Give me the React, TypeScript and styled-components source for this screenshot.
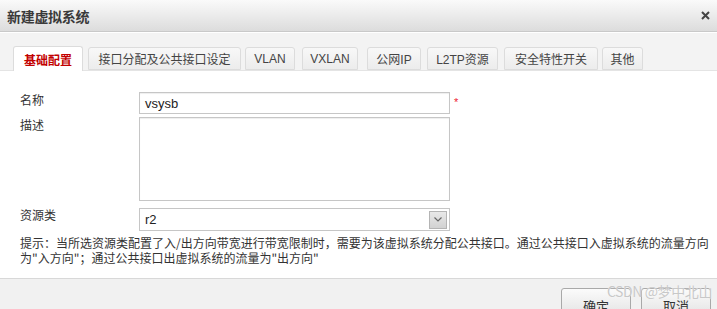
import React from 'react'
import styled, { createGlobalStyle } from 'styled-components'

const GlobalStyle = createGlobalStyle`
  html, body {
    margin: 0;
    padding: 0;
    overflow: hidden;
    background: #fff;
  }
  body {
    font-family: "Liberation Sans", "Noto Sans CJK SC", sans-serif;
    font-size: 12px;
    color: #333;
  }
`

const Dialog = styled.div`
  position: relative;
  width: 717px;
  height: 330px;
  display: flex;
  flex-direction: column;
  background: #fff;
`

const TitleBar = styled.div`
  height: 31px;
  display: flex;
  align-items: center;
  justify-content: space-between;
  padding: 0 6px 0 7px;
  background: linear-gradient(to bottom, #fafafa, #dcdcdc);
  border-bottom: 1px solid #c9c9c9;
`

const Title = styled.div`
  font-family: "Noto Sans CJK SC", sans-serif;
  font-size: 14px;
  font-weight: 700;
  color: #3a3a3a;
  letter-spacing: -0.3px;
`

const CloseButton = styled.div`
  width: 12px;
  height: 12px;
  display: flex;
  align-items: center;
  justify-content: center;
`

const TabStrip = styled.div`
  display: flex;
  align-items: flex-end;
  height: 37px;
  padding-left: 13px;
  background: #f3f3f3;
  border-top: 1px solid #fff;
  border-bottom: 1px solid #e4e4e4;
`

const Tab = styled.div<{ $active?: boolean; $w: number; $gap: number }>`
  width: ${({ $w }) => $w}px;
  margin-left: ${({ $gap }) => $gap}px;
  height: ${({ $active }) => ($active ? 25 : 23)}px;
  margin-bottom: ${({ $active }) => ($active ? -1 : 0)}px;
  box-sizing: border-box;
  display: flex;
  align-items: center;
  justify-content: center;
  border: 1px solid #dcdcdc;
  border-bottom: ${({ $active }) => ($active ? 'none' : '1px solid #dcdcdc')};
  border-radius: 3px 3px 0 0;
  background: ${({ $active }) => ($active ? '#fff' : 'linear-gradient(to bottom, #f8f8f8, #ececec)')};
  font-family: "Liberation Sans", "Noto Sans CJK SC", sans-serif;
  font-size: 12px;
  font-weight: ${({ $active }) => ($active ? 700 : 400)};
  color: ${({ $active }) => ($active ? '#c20000' : '#444')};
`

const Content = styled.div`
  flex: 1;
  padding: 21px 0 0 20px;
  background: #fff;
`

const FormGrid = styled.div`
  display: grid;
  grid-template-columns: 119px 311px auto;
  row-gap: 3px;
  align-items: start;
`

const Label = styled.div<{ $top: number }>`
  font-family: "Noto Sans CJK SC", sans-serif;
  font-size: 12px;
  line-height: 16px;
  color: #333;
  padding-top: ${({ $top }) => $top}px;
`

const TextInput = styled.div`
  height: 22px;
  box-sizing: border-box;
  border: 1px solid #c6c6c6;
  box-shadow: inset 0 1px 1px #eee;
  padding-left: 5px;
  display: flex;
  align-items: center;
  font-family: "Liberation Sans", sans-serif;
  font-size: 13px;
  color: #222;
`

const TextArea = styled.div`
  height: 84px;
  box-sizing: border-box;
  border: 1px solid #c6c6c6;
  box-shadow: inset 0 1px 1px #eee;
`

const Select = styled.div`
  margin-top: 4px;
  height: 23px;
  box-sizing: border-box;
  border: 1px solid #c6c6c6;
  padding: 0 2px 0 5px;
  display: flex;
  align-items: center;
  justify-content: space-between;
  font-family: "Liberation Sans", sans-serif;
  font-size: 13px;
  color: #222;
`

const SelectArrow = styled.div`
  width: 18px;
  height: 18px;
  box-sizing: border-box;
  border: 1px solid #b4b4b4;
  background: linear-gradient(to bottom, #e8e8e8, #d2d2d2);
  display: flex;
  align-items: center;
  justify-content: center;
`

const Required = styled.span`
  color: #e23;
  font-size: 11px;
  padding: 4px 0 0 4px;
`

const Hint = styled.div`
  margin-top: 4px;
  width: 690px;
  font-family: "Noto Sans CJK SC", sans-serif;
  font-size: 12px;
  line-height: 15px;
  color: #333;
`

const Footer = styled.div`
  height: 42px;
  border-top: 1px solid #d8d8d8;
  background: #f1f1f1;
  display: flex;
  justify-content: flex-end;
  align-items: flex-start;
  gap: 10px;
  padding: 9px 6px 0 0;
`

const Button = styled.div`
  width: 70px;
  height: 30px;
  box-sizing: border-box;
  padding-top: 4px;
  border: 1px solid #a9a9a9;
  border-radius: 3px;
  background: linear-gradient(to bottom, #fbfbfb, #e2e2e2);
  display: flex;
  align-items: center;
  justify-content: center;
  font-family: "Noto Sans CJK SC", sans-serif;
  font-size: 13px;
  color: #333;
`

const Watermark = styled.div`
  position: absolute;
  right: 5px;
  top: 281px;
  font-family: "Noto Sans CJK SC", sans-serif;
  font-size: 14px;
  color: #c8c8c8;
  text-shadow: 0 0 1px #fff;
  letter-spacing: -0.4px;
  pointer-events: none;
`

const tabs = [
  { label: '基础配置', w: 70, gap: 0, active: true },
  { label: '接口分配及公共接口设定', w: 153, gap: 5 },
  { label: 'VLAN', w: 50, gap: 4 },
  { label: 'VXLAN', w: 56, gap: 7 },
  { label: '公网IP', w: 54, gap: 9 },
  { label: 'L2TP资源', w: 71, gap: 6 },
  { label: '安全特性开关', w: 94, gap: 6 },
  { label: '其他', w: 41, gap: 4 },
]

export default function App() {
  return (
    <Dialog>
      <GlobalStyle />
      <TitleBar>
        <Title>新建虚拟系统</Title>
        <CloseButton>
          <svg width="9" height="9" viewBox="0 0 9 9">
            <path d="M1 1L8 8M8 1L1 8" stroke="#444" strokeWidth="2" />
          </svg>
        </CloseButton>
      </TitleBar>

      <TabStrip>
        {tabs.map((t) => (
          <Tab key={t.label} $active={t.active} $w={t.w} $gap={t.gap}>
            {t.label}
          </Tab>
        ))}
      </TabStrip>

      <Content>
        <FormGrid>
          <Label $top={0}>名称</Label>
          <TextInput>vsysb</TextInput>
          <Required>*</Required>

          <Label $top={0}>描述</Label>
          <TextArea />
          <span />

          <Label $top={3}>资源类</Label>
          <Select>
            r2
            <SelectArrow>
              <svg width="8" height="5" viewBox="0 0 8 5">
                <path d="M0.5 0.5L4 4L7.5 0.5" stroke="#666" strokeWidth="1.2" fill="none" />
              </svg>
            </SelectArrow>
          </Select>
          <span />
        </FormGrid>
        <Hint>
          提示：当所选资源类配置了入/出方向带宽进行带宽限制时，需要为该虚拟系统分配公共接口。通过公共接口入虚拟系统的流量方向为"入方向"；通过公共接口出虚拟系统的流量为"出方向"
        </Hint>
      </Content>

      <Footer>
        <Button>确定</Button>
        <Button>取消</Button>
      </Footer>
      <Watermark>CSDN @梦中北山</Watermark>
    </Dialog>
  )
}
